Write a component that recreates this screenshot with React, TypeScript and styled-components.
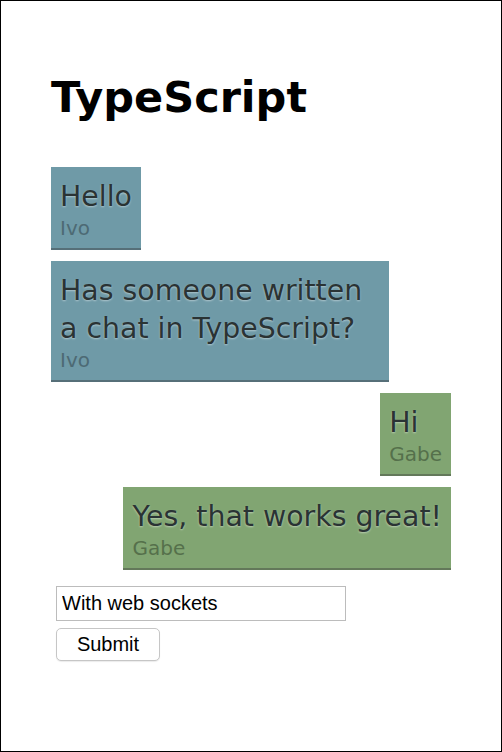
import styled, { createGlobalStyle } from "styled-components";

const GlobalStyle = createGlobalStyle`
    html, body {
        margin: 0;
        padding: 0;
        background: white;
    }
`;

type Message = { text: string; author: string; mine: boolean };

const messages: Message[] = [
    { text: "Hello", author: "Ivo", mine: false },
    { text: "Has someone written a chat in TypeScript?", author: "Ivo", mine: false },
    { text: "Hi", author: "Gabe", mine: true },
    { text: "Yes, that works great!", author: "Gabe", mine: true },
];

export default function App() {
    return (
        <>
            <GlobalStyle />
            <Frame>
                <Title>TypeScript</Title>
                <MessageList>
                    {messages.map((m, i) => (
                        <Bubble key={i} $mine={m.mine}>
                            <span className="text">{m.text}</span>
                            <Author $mine={m.mine}>{m.author}</Author>
                        </Bubble>
                    ))}
                </MessageList>
                <ComposeForm onSubmit={(e) => e.preventDefault()}>
                    <TextInput type="text" defaultValue="With web sockets" />
                    <SubmitButton type="submit">Submit</SubmitButton>
                </ComposeForm>
            </Frame>
        </>
    );
}

const Frame = styled.div`
    box-sizing: border-box;
    width: 502px;
    height: 752px;
    border: 1px solid black;
    padding: 0 50px;
    font-family: "DejaVu Sans", Verdana, sans-serif;
`;

const Title = styled.h1`
    margin: 72px 0 45px 0;
    font-size: 43px;
    font-weight: bold;
    line-height: 49px;
    color: black;
`;

const MessageList = styled.div`
    display: flex;
    flex-direction: column;
    gap: 11px;
`;

const Bubble = styled.div<{ $mine: boolean }>`
    display: flex;
    flex-direction: column;
    align-self: ${(props) => (props.$mine ? "flex-end" : "flex-start")};
    max-width: 80%;
    padding: 11px 9px 8px 9px;
    background: ${(props) => (props.$mine ? "#81a572" : "#6f9aa7")};
    border-bottom: 2px solid ${(props) => (props.$mine ? "#63785a" : "#566f78")};
    .text {
        font-size: 28.4px;
        line-height: 38px;
        color: #2a3334;
        text-shadow: 0 1px 2px rgba(255, 255, 255, 0.45);
    }
`;

const Author = styled.span<{ $mine: boolean }>`
    font-size: 20px;
    line-height: 24px;
    color: ${(props) => (props.$mine ? "#55704b" : "#4d6a74")};
`;

const ComposeForm = styled.form`
    display: flex;
    flex-direction: column;
    align-items: flex-start;
    gap: 7px;
    margin: 16px 0 0 5px;
`;

const TextInput = styled.input`
    box-sizing: border-box;
    width: 290px;
    height: 35px;
    padding: 0 5px;
    border: 1px solid #bcbcbc;
    font-family: "Liberation Sans", Arial, sans-serif;
    font-size: 20px;
    color: black;
    outline: none;
`;

const SubmitButton = styled.button`
    box-sizing: border-box;
    width: 104px;
    height: 33px;
    padding: 0;
    background: white;
    border: 1px solid #c6c6c6;
    border-radius: 5px;
    box-shadow: 0 1px 1px rgba(0, 0, 0, 0.08);
    font-family: "Liberation Sans", Arial, sans-serif;
    font-size: 20px;
    color: black;
`;
